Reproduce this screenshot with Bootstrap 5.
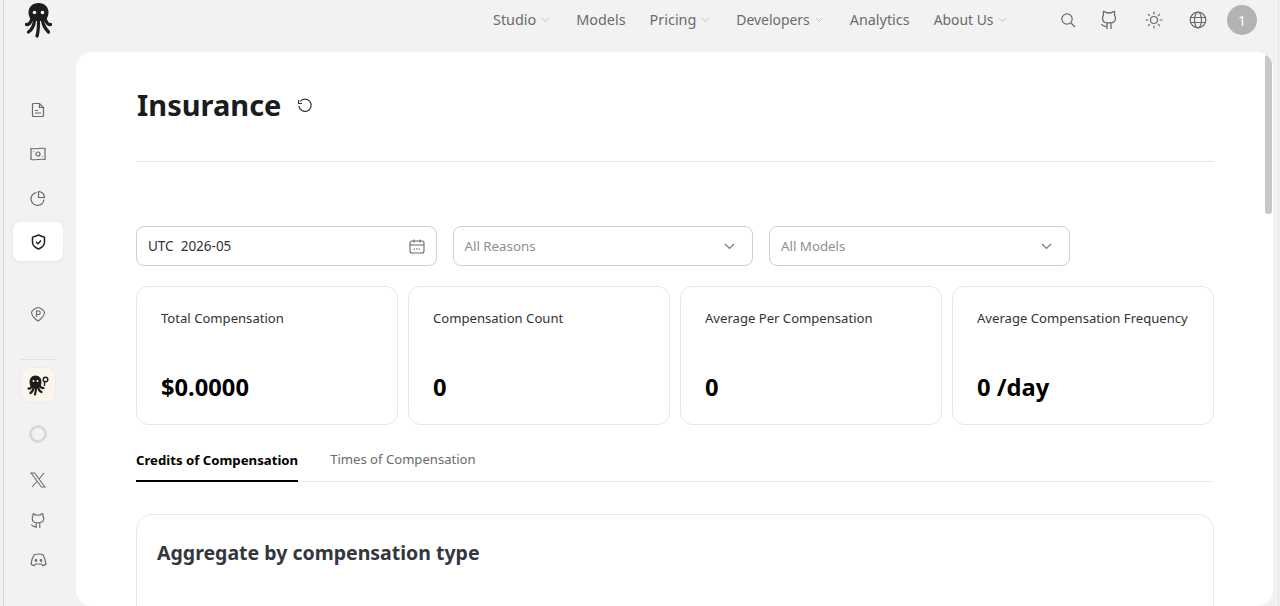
<!DOCTYPE html>
<html lang="en">
<head>
    <meta charset="UTF-8">
    <meta name="viewport" content="width=device-width, initial-scale=1.0">
    <title>Insurance</title>
    <link href="https://cdn.jsdelivr.net/npm/bootstrap@5.3.2/dist/css/bootstrap.min.css" rel="stylesheet">
    <style>
        html, body { height: 100%; overflow: hidden; }
        body { background: #f2f2f2; font-family: "Noto Sans", "Open Sans", sans-serif; color: #1f1f1f; }
        svg { display: block; flex: none; }
        .app-shell { height: 606px; margin: 0 1px 0 3px; border-left: 1px solid #d4d4d4; border-right: 1px solid #e6e6e6; }
        .top-bar { height: 52px; padding-bottom: 12px; }
        .brand-cell { width: 72px; padding-right: 3px; }
        .nav-strip { margin-left: 417px; }
        .top-link { font-size: 14.4px; color: #6b6b6b; text-decoration: none; }
        .top-link.has-caret { margin-right: 2px; }
        .top-link.is-narrow { font-size: 13.9px; }
        .top-chevron { color: #c4c4c4; margin-left: 5px; }
        .top-tools { color: #6b6b6b; margin-right: 21px; }
        .tool-sun { margin-left: 3px; }
        .tool-globe { margin-left: 2px; }
        .user-dot { width: 30px; height: 30px; background: #b3b3b3; color: #fff; font-size: 14px; margin-left: -4px; }
        .body-row { height: 554px; }
        .side-rail { width: 72px; padding-right: 4px; }
        .rail-btn { width: 50px; height: 39px; color: #6a6a6a; margin-top: 5px; }
        .rail-btn.is-on { background: #fff; color: #1f1f1f; border-radius: 8px; box-shadow: 0 1px 4px rgba(0,0,0,.06); }
        .rail-first { margin-top: 38px; }
        .rail-pts { margin-top: 33px; }
        .rail-rule { width: 36px; border-top: 1px solid #e2e2e2; margin-top: 26px; }
        .mascot-tile { width: 36px; height: 36px; background: #faf6ee; border: 1px solid #ececec; border-radius: 10px; margin-top: 7px; }
        .spin-ring { width: 18px; height: 18px; border: 3px solid #d9d9d9; border-radius: 50%; margin-top: 22px; }
        .rail-x { margin-top: 17px; }
        .rail-tight { margin-top: 2px; }
        .rail-last { margin-top: 0; }
        .sheet { width: 1197px; background: #fff; border-radius: 16px; }
        .sheet-inner { padding: 0 59px 0 60px; }
        .page-title { font-size: 29px; font-weight: 700; line-height: 40px; margin: 0 0 0 1px; color: #1c1c1c; }
        .title-row { height: 110px; padding-top: 33px; border-bottom: 1px solid #e6e6e6; }
        .refresh-icon { margin-top: 13px; }
        .filter-row { margin-top: 64px; }
        .filter-box { width: 300.5px; height: 40px; border: 1px solid #cfcfcf; border-radius: 8px; padding: 0 11px; font-size: 13.5px; color: #333; }
        .filter-ph { color: #8f8f8f; font-size: 13.3px; padding-top: 1px; }
        .filter-caret { margin-right: 6px; }
        .stat-row { margin-top: 20px; }
        .stat-box { flex: none; width: 262px; height: 139px; border: 1px solid #e6e6e6; border-radius: 12px; padding: 21px 10px 0 24px; }
        .stat-name { font-size: 13.1px; line-height: 20px; color: #333; white-space: nowrap; }
        .stat-num { font-size: 23.7px; font-weight: 700; line-height: 32px; color: #000; margin-top: 43px; }
        .tab-row { margin-top: 21px; border-bottom: 1px solid #ececec; height: 36px; gap: 32px; }
        .tab-item { font-size: 13.1px; color: #6b6b6b; line-height: 27px; }
        .tab-item.is-on { font-size: 13.2px; line-height: 28px; font-weight: 700; color: #000; border-bottom: 2px solid #000; height: 36px; }
        .chart-box { margin-top: 32px; height: 200px; border: 1px solid #e6e6e6; border-radius: 16px; padding: 22px 20px; }
        .chart-title { font-size: 19.5px; font-weight: 700; line-height: 32px; color: #33373d; margin: 0; }
        .fake-scroll { width: 7px; height: 160px; background: #c8c8c8; border-radius: 4px; top: 2px; right: 1px; }
    </style>
</head>
<body>

<div class="app-shell d-flex flex-column">
    <!-- top bar -->
    <div class="top-bar d-flex align-items-center">
        <div class="brand-cell d-flex justify-content-center">
            <svg width="27" height="35" viewBox="0 0 27 35" fill="#1d1d1d">
                <path d="M13.500 0C7.500 0 3.500 4 3.500 9.500c0 3.500 1.500 6.500 4 8.500h12c2.500-2 4-5 4-8.500C23.500 4 19.500 0 13.500 0z"/>
                <g fill="none" stroke="#1d1d1d" stroke-width="3.200" stroke-linecap="round">
                    <path d="M7 15C6 20 3.500 22 1.500 21.500"/>
                    <path d="M9.500 17C9 23 6.500 27 3.500 29"/>
                    <path d="M13.500 18C13.500 24 13.200 29 12 33"/>
                    <path d="M17.500 17C18 23 20.500 26 23.500 29"/>
                    <path d="M20 15C21 20 23.500 22 25.500 21.500"/>
                </g>
                <circle cx="9.500" cy="9.500" r="1.800" fill="#f2f2f2"/><circle cx="17.500" cy="9.500" r="1.800" fill="#f2f2f2"/>
            </svg>
        </div>
        <nav class="d-flex align-items-center nav-strip">
            <a class="top-link has-caret d-flex align-items-center" href="#">Studio<svg class="top-chevron" width="9" height="6" viewBox="0 0 9 6" fill="none" stroke="currentColor"><path d="M1 1l3.500 3.500L8 1"/></svg></a>
            <a class="top-link ms-4" href="#">Models</a>
            <a class="top-link has-caret d-flex align-items-center ms-4" href="#">Pricing<svg class="top-chevron" width="9" height="6" viewBox="0 0 9 6" fill="none" stroke="currentColor"><path d="M1 1l3.500 3.500L8 1"/></svg></a>
            <a class="top-link is-narrow has-caret d-flex align-items-center ms-4" href="#">Developers<svg class="top-chevron" width="9" height="6" viewBox="0 0 9 6" fill="none" stroke="currentColor"><path d="M1 1l3.500 3.500L8 1"/></svg></a>
            <a class="top-link ms-4" href="#">Analytics</a>
            <a class="top-link is-narrow d-flex align-items-center ms-4" href="#">About Us<svg class="top-chevron" width="9" height="6" viewBox="0 0 9 6" fill="none" stroke="currentColor"><path d="M1 1l3.500 3.500L8 1"/></svg></a>
        </nav>
        <div class="d-flex align-items-center ms-auto gap-4 top-tools">
            <svg width="16" height="16" viewBox="0 0 16 16" fill="none" stroke="currentColor" stroke-width="1.200"><circle cx="7" cy="7" r="5.200"/><path d="M11 11l4 4"/></svg>
            <svg width="18" height="20" viewBox="0 0 18 20" fill="none" stroke="currentColor" stroke-width="1.300"><path d="M7 19v-4c0-1 .5-1.600 1-2-3 0-5.500-1-5.500-5 0-1 .4-2 1-2.600C3.300 4.500 3.300 3 3.500 1.500c1 0 2.500.6 3.500 1.500 1.300-.3 2.700-.3 4 0 1-.9 2.500-1.500 3.500-1.500.2 1.500.2 3-.1 3.900.6.600 1.100 1.600 1.100 2.600 0 4-2.500 5-5.500 5 .5.400 1 1 1 2v4M7 16c-3 1-4.500 0-5.500-2"/></svg>
            <svg class="tool-sun" width="18" height="18" viewBox="0 0 18 18" fill="none" stroke="currentColor" stroke-width="1.200" stroke-linecap="round"><circle cx="9" cy="9" r="3.500"/><path d="M9 1v2M9 15v2M1 9h2M15 9h2M3.300 3.300l1.400 1.400M13.300 13.300l1.400 1.400M3.300 14.700l1.400-1.400M13.300 4.700l1.400-1.400"/></svg>
            <svg class="tool-globe" width="18" height="18" viewBox="0 0 18 18" fill="none" stroke="currentColor" stroke-width="1.200"><circle cx="9" cy="9" r="7.800"/><ellipse cx="9" cy="9" rx="3.500" ry="7.800"/><path d="M1.500 6.500h15M1.500 11.500h15"/></svg>
            <div class="user-dot rounded-circle d-flex align-items-center justify-content-center">1</div>
        </div>
    </div>

    <div class="body-row d-flex">
        <!-- left rail -->
        <div class="side-rail d-flex flex-column align-items-center">
            <div class="rail-btn rail-first d-flex align-items-center justify-content-center">
                <svg width="16" height="16" viewBox="0 0 16 16" fill="none" stroke="currentColor" stroke-width="1.200"><path d="M3.500 1.500h6l4 4v8a1 1 0 0 1-1 1h-9a1 1 0 0 1-1-1v-11a1 1 0 0 1 1-1zM5 8.500h3M5 11h6"/><path d="M9.500 1.500v4h4"/></svg>
            </div>
            <div class="rail-btn d-flex align-items-center justify-content-center">
                <svg width="16" height="14" viewBox="0 0 16 14" fill="none" stroke="currentColor" stroke-width="1.200"><path d="M1 1.500c4.500 1 9-1 14 0v11c-5-1-9.500 1-14 0z"/><circle cx="8" cy="7" r="2"/><path d="M3.500 4.500v.5M12.500 9v.5"/></svg>
            </div>
            <div class="rail-btn d-flex align-items-center justify-content-center">
                <svg width="16" height="16" viewBox="0 0 16 16" fill="none" stroke="currentColor" stroke-width="1.200"><path d="M6.500 2.500A6.500 6.500 0 1 0 14 9.500"/><path d="M8.500 1.500a6 6 0 0 1 6 6h-6z"/></svg>
            </div>
            <div class="rail-btn is-on d-flex align-items-center justify-content-center">
                <svg width="15" height="16" viewBox="0 0 15 16" fill="none" stroke="currentColor" stroke-width="1.500"><path d="M7.500 1l6 2.200v5c0 3.500-3 5.500-6 6.800-3-1.300-6-3.300-6-6.800v-5z"/><path d="M5 8l2 1.800L10 6.500"/></svg>
            </div>
            <div class="rail-btn rail-pts d-flex align-items-center justify-content-center">
                <svg width="16" height="16" viewBox="0 0 16 16" fill="none" stroke="currentColor" stroke-width="1.100"><path d="M8 1.500c2 0 6.500 3 6.500 5 0 3-4 7-6.500 8.500-2.500-1.500-6.500-5.500-6.500-8.500 0-2 4.500-5 6.500-5z"/><path d="M6.500 11V5h2a1.700 1.700 0 0 1 0 3.500h-2"/></svg>
            </div>
            <div class="rail-rule"></div>
            <div class="mascot-tile d-flex align-items-center justify-content-center">
                <svg width="24" height="22" viewBox="0 0 24 22" fill="#1d1d1d">
                    <path d="M9.500 1.500C5.500 1.500 3.500 4.500 3.500 8c0 2.500 1 4.500 2.500 6h7c1.500-1.500 2.500-3.500 2.500-6 0-3.500-2-6.500-6-6.500z"/>
                    <g fill="none" stroke="#1d1d1d" stroke-width="2.200" stroke-linecap="round">
                        <path d="M6 11C5.500 14 4 15 2.500 14.500"/>
                        <path d="M8 12.500C7.500 16 6 18 4.500 19"/>
                        <path d="M10 13C10 16 9.800 18 9 20.500"/>
                        <path d="M12 12.500C12.500 16 14 17.500 15.500 18"/>
                        <path d="M13.500 11C14.500 13 16 14.500 17.500 14"/>
                    </g>
                    <circle cx="7.500" cy="7" r="1" fill="#faf6ee"/><circle cx="11.500" cy="7" r="1" fill="#faf6ee"/>
                    <circle cx="19.500" cy="5.500" r="2.300" fill="none" stroke="#1d1d1d" stroke-width="1.400"/>
                    <path d="M18.500 8v4" fill="none" stroke="#1d1d1d" stroke-width="1.400"/>
                </svg>
            </div>
            <div class="spin-ring"></div>
            <div class="rail-btn rail-x d-flex align-items-center justify-content-center">
                <svg width="16" height="16" viewBox="0 0 16 16" fill="none" stroke="currentColor" stroke-width="1.100"><path d="M1 1h3.500l10.500 14h-3.500zM14 1L9 7M7 9.500L2 15"/></svg>
            </div>
            <div class="rail-btn rail-tight d-flex align-items-center justify-content-center">
                <svg width="16" height="16" viewBox="0 0 18 18" fill="none" stroke="currentColor" stroke-width="1.300"><path d="M7 17v-4c0-1 .5-1.600 1-2-3 0-5.500-1-5.500-5 0-1 .4-2 1-2.600C3.300 2.500 3.300 2 3.500 1c1 0 2.500.6 3.500 1.500 1.300-.3 2.700-.3 4 0C12 1.600 13.500 1 14.500 1c.2 1 .2 1.500-.1 2.400.6.600 1.100 1.600 1.100 2.600 0 4-2.500 5-5.500 5 .5.400 1 1 1 2v4M7 15c-3 1-4.500 0-5.500-2"/></svg>
            </div>
            <div class="rail-btn rail-last d-flex align-items-center justify-content-center">
                <svg width="17" height="14" viewBox="0 0 17 14" fill="none" stroke="currentColor" stroke-width="1.200"><path d="M4 2c1.500-.7 3-1 4.500-1s3 .3 4.500 1c1.500 2.500 2.500 5 3 9-1 1-2.500 1.500-3.500 1.700l-1-1.700h-6l-1 1.700C3.500 12.500 2 12 1 11c.5-4 1.500-6.500 3-9z"/><circle cx="6" cy="7.500" r=".8"/><circle cx="11" cy="7.500" r=".8"/></svg>
            </div>
        </div>

        <!-- main sheet -->
        <div class="sheet position-relative overflow-hidden">
            <div class="fake-scroll position-absolute"></div>
            <div class="sheet-inner">
                <div class="title-row d-flex align-items-start gap-3">
                    <h1 class="page-title">Insurance</h1>
                    <svg class="refresh-icon" width="16" height="16" viewBox="0 0 16 16" fill="none" stroke="#333" stroke-width="1.200"><path d="M3 3.500A6.200 6.200 0 1 1 1.800 8"/><path d="M1.500 2v3.500H5" stroke-linejoin="round"/></svg>
                </div>

                <div class="filter-row d-flex gap-3">
                    <div class="filter-box d-flex align-items-center justify-content-between">
                        <span>UTC&nbsp;&nbsp;2026-05</span>
                        <svg width="16" height="15" viewBox="0 0 16 15" fill="none" stroke="#666" stroke-width="1.100"><rect x="1" y="2" width="14" height="12" rx="2"/><path d="M1 6h14M5 .5v3M11 .5v3"/><path d="M4.500 10h7" stroke-dasharray="1.500 1"/></svg>
                    </div>
                    <div class="filter-box d-flex align-items-center justify-content-between">
                        <span class="filter-ph">All Reasons</span>
                        <svg class="filter-caret" width="11" height="7" viewBox="0 0 11 7" fill="none" stroke="#777" stroke-width="1.100"><path d="M1 1l4.500 4.500L10 1"/></svg>
                    </div>
                    <div class="filter-box d-flex align-items-center justify-content-between">
                        <span class="filter-ph">All Models</span>
                        <svg class="filter-caret" width="11" height="7" viewBox="0 0 11 7" fill="none" stroke="#777" stroke-width="1.100"><path d="M1 1l4.500 4.500L10 1"/></svg>
                    </div>
                </div>

                <div class="stat-row d-flex justify-content-between">
                    <div class="stat-box"><div class="stat-name">Total Compensation</div><div class="stat-num">$0.0000</div></div>
                    <div class="stat-box"><div class="stat-name">Compensation Count</div><div class="stat-num">0</div></div>
                    <div class="stat-box"><div class="stat-name">Average Per Compensation</div><div class="stat-num">0</div></div>
                    <div class="stat-box"><div class="stat-name">Average Compensation Frequency</div><div class="stat-num">0 /day</div></div>
                </div>

                <div class="tab-row d-flex align-items-start">
                    <div class="tab-item is-on">Credits of Compensation</div>
                    <div class="tab-item">Times of Compensation</div>
                </div>

                <div class="chart-box">
                    <h2 class="chart-title">Aggregate by compensation type</h2>
                </div>
            </div>
        </div>
    </div>
</div>

<script src="https://cdn.jsdelivr.net/npm/bootstrap@5.3.2/dist/js/bootstrap.bundle.min.js"></script>
</body>
</html>
